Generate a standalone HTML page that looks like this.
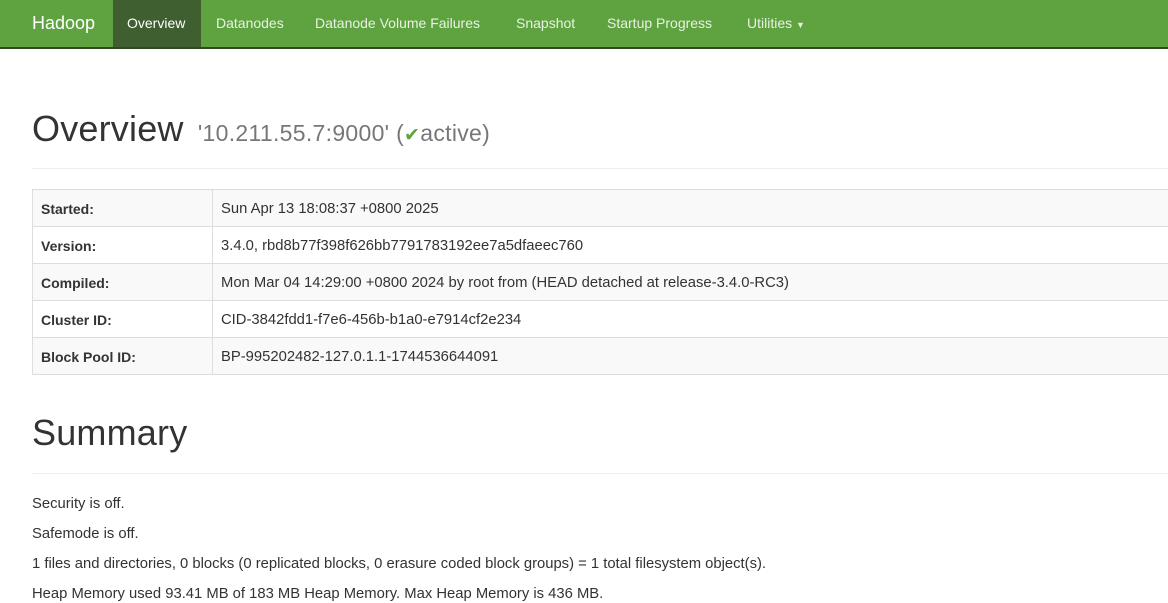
<!DOCTYPE html>
<html><head><style>
body{margin:0;font-family:"Liberation Sans",Helvetica,Arial,sans-serif;font-size:14px;color:#333;background:#fff;width:1168px;height:603px;overflow:hidden}
.nav{height:47px;background:#5fa341;border-bottom:2px solid #2f4a22;position:relative}
.nav a{position:absolute;top:0;height:47px;line-height:46px;color:#e8f2e2;font-size:14px;text-decoration:none}
.brand{font-size:18px!important;color:#fff!important}
.act{background:#3f5f30;color:#fff!important;padding:0 14px}
.c{position:absolute;left:32px;width:1180px}
h1{font-size:36px;font-weight:500;margin:0;color:#333;letter-spacing:0.2px}
h1 small{font-size:23px;color:#777;font-weight:400;margin-left:4px;letter-spacing:0.3px}
hr{border:0;border-top:1px solid #eee;margin:0}
.row{position:relative;height:36px;border:1px solid #ddd;border-top:none;width:1180px}
.row:first-child{border-top:1px solid #ddd}
.row.o{background:#f9f9f9}
.row .l{position:absolute;left:8px;top:1px;line-height:36px;font-weight:bold;font-size:14px}
.row .v{position:absolute;left:188px;top:1px;line-height:36px;font-size:14.8px}
.row .sep{position:absolute;left:179px;top:0;bottom:0;border-left:1px solid #ddd}
p{margin:0;position:absolute;left:0;font-size:14.8px}
</style></head><body>
<div class="nav">
<a class="brand" style="left:32px">Hadoop</a>
<a class="act" style="left:113px;width:60px">Overview</a>
<a style="left:216px">Datanodes</a>
<a style="left:315px">Datanode Volume Failures</a>
<a style="left:516px">Snapshot</a>
<a style="left:607px">Startup Progress</a>
<a style="left:747px">Utilities <span style="font-size:9px">▼</span></a>
</div>
<div class="c" style="top:108px"><h1>Overview <small>'10.211.55.7:9000' (<span style="color:#5fa341;font-size:19px">✔</span>active)</small></h1></div>
<div class="c" style="top:168px"><hr></div>
<div class="c" style="top:189px">
<div class="row o"><span class="sep"></span><span class="l">Started:</span><span class="v">Sun Apr 13 18:08:37 +0800 2025</span></div>
<div class="row"><span class="sep"></span><span class="l">Version:</span><span class="v">3.4.0, rbd8b77f398f626bb7791783192ee7a5dfaeec760</span></div>
<div class="row o"><span class="sep"></span><span class="l">Compiled:</span><span class="v">Mon Mar 04 14:29:00 +0800 2024 by root from (HEAD detached at release-3.4.0-RC3)</span></div>
<div class="row"><span class="sep"></span><span class="l">Cluster ID:</span><span class="v">CID-3842fdd1-f7e6-456b-b1a0-e7914cf2e234</span></div>
<div class="row o"><span class="sep"></span><span class="l">Block Pool ID:</span><span class="v">BP-995202482-127.0.1.1-1744536644091</span></div>
</div>
<div class="c" style="top:412px"><h1>Summary</h1></div>
<div class="c" style="top:473px"><hr></div>
<div class="c" style="top:496px">
<p style="top:0">Security is off.</p>
<p style="top:30px">Safemode is off.</p>
<p style="top:60px">1 files and directories, 0 blocks (0 replicated blocks, 0 erasure coded block groups) = 1 total filesystem object(s).</p>
<p style="top:90px">Heap Memory used 93.41 MB of 183 MB Heap Memory. Max Heap Memory is 436 MB.</p>
</div>
</body></html>
